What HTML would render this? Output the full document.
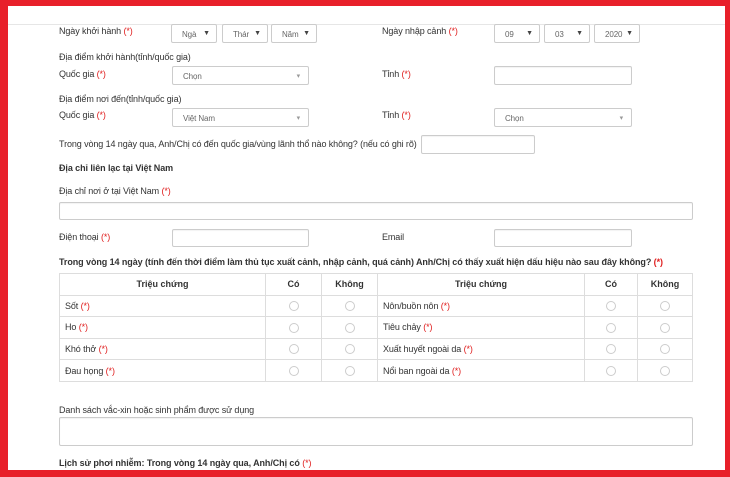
<!DOCTYPE html>
<html><head><meta charset="utf-8"><style>
*{box-sizing:border-box;margin:0;padding:0}
body{width:730px;height:477px;overflow:hidden;background:#fff;font-family:"Liberation Sans",Arial,sans-serif;font-size:9px;letter-spacing:-0.1px;color:#333;position:relative}
.a{position:absolute;white-space:nowrap}
.r{color:#e02020}
.b{font-weight:bold;letter-spacing:-0.08px}
.box{position:absolute;border:1px solid #ccc;border-radius:2px;background:#fff;box-shadow:inset 0 1px 1px rgba(0,0,0,.05)}
.sel{position:absolute;border:1px solid #ccc;border-radius:2px;background:#fff;font-size:8px;color:#666;padding:5px 0 0 10px;overflow:hidden}
.sel .ar{position:absolute;right:6px;top:5px;font-size:7px;color:#444}
.sel .ar2{position:absolute;right:8px;top:5px;font-size:7px;color:#999}
table{position:absolute;border-collapse:collapse;font-size:9px}
td,th{border:1px solid #ddd;height:21.6px;padding:0 5px}
th{text-align:center;font-weight:bold;color:#333;letter-spacing:0}
.rd{text-align:center}
.rd span{display:inline-block;width:10px;height:10px;border:1px solid #ccc;border-radius:50%;vertical-align:middle}
.frame{position:absolute;background:#e8202a}
</style></head><body>
<div class="a" style="left:8px;top:24px;width:717px;height:1px;background:#e6e6e6"></div>

<div class="a" style="left:59px;top:26px">Ngày khởi hành <span class="r">(*)</span></div>
<div class="sel" style="left:171px;top:24px;width:46px;height:19px">Ngà<span class="ar">▼</span></div>
<div class="sel" style="left:222px;top:24px;width:46px;height:19px">Thár<span class="ar">▼</span></div>
<div class="sel" style="left:271px;top:24px;width:46px;height:19px">Năm<span class="ar">▼</span></div>
<div class="a" style="left:382px;top:26px">Ngày nhập cảnh <span class="r">(*)</span></div>
<div class="sel" style="left:494px;top:24px;width:46px;height:19px">09<span class="ar">▼</span></div>
<div class="sel" style="left:544px;top:24px;width:46px;height:19px">03<span class="ar">▼</span></div>
<div class="sel" style="left:594px;top:24px;width:46px;height:19px">2020<span class="ar">▼</span></div>

<div class="a" style="left:59px;top:52px">Địa điểm khởi hành(tỉnh/quốc gia)</div>
<div class="a" style="left:59px;top:69px">Quốc gia <span class="r">(*)</span></div>
<div class="sel" style="left:172px;top:66px;width:137px;height:19px">Chọn<span class="ar2">▾</span></div>
<div class="a" style="left:382px;top:69px">Tỉnh <span class="r">(*)</span></div>
<div class="box" style="left:494px;top:66px;width:138px;height:19px"></div>

<div class="a" style="left:59px;top:94px">Địa điểm nơi đến(tỉnh/quốc gia)</div>
<div class="a" style="left:59px;top:110px">Quốc gia <span class="r">(*)</span></div>
<div class="sel" style="left:172px;top:108px;width:137px;height:19px">Việt Nam<span class="ar2">▾</span></div>
<div class="a" style="left:382px;top:110px">Tỉnh <span class="r">(*)</span></div>
<div class="sel" style="left:494px;top:108px;width:138px;height:19px">Chọn<span class="ar2">▾</span></div>

<div class="a" style="left:59px;top:139px">Trong vòng 14 ngày qua, Anh/Chị có đến quốc gia/vùng lãnh thổ nào không? (nếu có ghi rõ)</div>
<div class="box" style="left:421px;top:135px;width:114px;height:19px"></div>

<div class="a b" style="left:59px;top:163px">Địa chỉ liên lạc tại Việt Nam</div>
<div class="a" style="left:59px;top:186px">Địa chỉ nơi ở tại Việt Nam <span class="r">(*)</span></div>
<div class="box" style="left:59px;top:202px;width:634px;height:18px"></div>
<div class="a" style="left:59px;top:232px">Điện thoại <span class="r">(*)</span></div>
<div class="box" style="left:172px;top:229px;width:137px;height:18px"></div>
<div class="a" style="left:382px;top:232px">Email</div>
<div class="box" style="left:494px;top:229px;width:138px;height:18px"></div>

<div class="a b" style="left:59px;top:257px">Trong vòng 14 ngày (tính đến thời điểm làm thủ tục xuất cảnh, nhập cảnh, quá cảnh) Anh/Chị có thấy xuất hiện dấu hiệu nào sau đây không? <span class="r">(*)</span></div>

<table style="left:59px;top:273px;width:319px">
<tr><th style="width:206px">Triệu chứng</th><th style="width:56px">Có</th><th>Không</th></tr>
<tr><td>Sốt <span class="r">(*)</span></td><td class="rd"><span></span></td><td class="rd"><span></span></td></tr>
<tr><td>Ho <span class="r">(*)</span></td><td class="rd"><span></span></td><td class="rd"><span></span></td></tr>
<tr><td>Khó thở <span class="r">(*)</span></td><td class="rd"><span></span></td><td class="rd"><span></span></td></tr>
<tr><td>Đau họng <span class="r">(*)</span></td><td class="rd"><span></span></td><td class="rd"><span></span></td></tr>
</table>
<table style="left:377px;top:273px;width:316px">
<tr><th style="width:207px">Triệu chứng</th><th style="width:53px">Có</th><th>Không</th></tr>
<tr><td>Nôn/buồn nôn <span class="r">(*)</span></td><td class="rd"><span></span></td><td class="rd"><span></span></td></tr>
<tr><td>Tiêu chảy <span class="r">(*)</span></td><td class="rd"><span></span></td><td class="rd"><span></span></td></tr>
<tr><td>Xuất huyết ngoài da <span class="r">(*)</span></td><td class="rd"><span></span></td><td class="rd"><span></span></td></tr>
<tr><td>Nổi ban ngoài da <span class="r">(*)</span></td><td class="rd"><span></span></td><td class="rd"><span></span></td></tr>
</table>

<div class="a" style="left:59px;top:405px">Danh sách vắc-xin hoặc sinh phẩm được sử dụng</div>
<div class="box" style="left:59px;top:417px;width:634px;height:29px"></div>
<div class="a b" style="left:59px;top:458px">Lịch sử phơi nhiễm: Trong vòng 14 ngày qua, Anh/Chị có <span class="r" style="font-weight:normal">(*)</span></div>

<div class="frame" style="left:0;top:0;width:730px;height:6px"></div>
<div class="frame" style="left:0;top:0;width:8px;height:477px"></div>
<div class="frame" style="left:725px;top:0;width:5px;height:477px"></div>
<div class="frame" style="left:0;top:470px;width:730px;height:7px"></div>
</body></html>
